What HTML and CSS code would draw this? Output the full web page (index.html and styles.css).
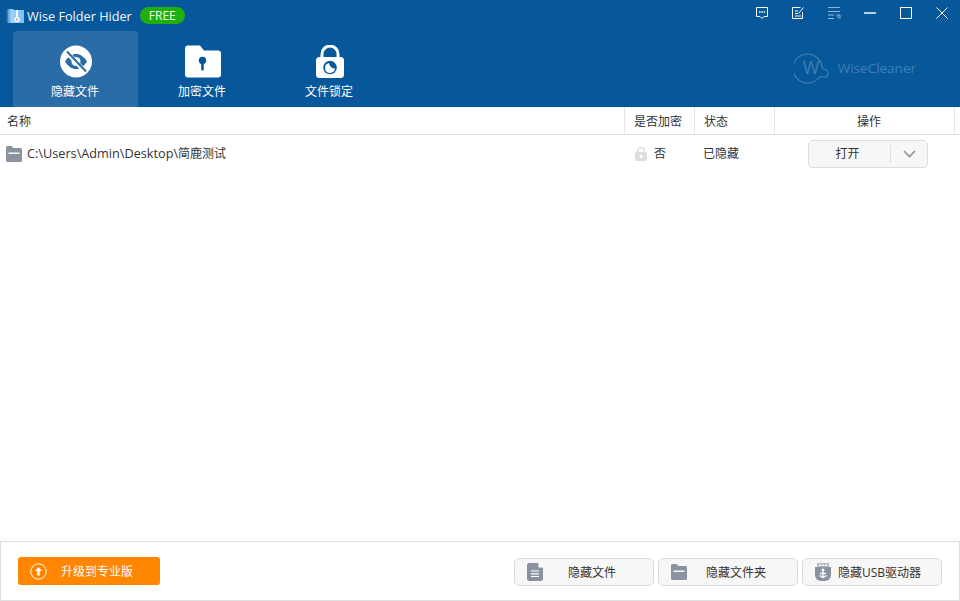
FILE: index.html
```html
<!DOCTYPE html>
<html lang="zh-CN">
<head>
<meta charset="utf-8">
<title>Wise Folder Hider</title>
<link rel="stylesheet" href="styles.css">
</head>
<body>
<div class="app">
  <header class="header">
    <div class="titlebar">
      <svg class="app-logo" width="18" height="15" viewBox="0 0 18 15"><defs><linearGradient id="lg" x1="0" y1="0" x2="1" y2="0"><stop offset="0" stop-color="#2f7fcb"/><stop offset=".3" stop-color="#9fd2f6"/><stop offset="1" stop-color="#7fbcec"/></linearGradient></defs><path d="M0 1h7l1 1h10v13H0z" fill="url(#lg)"/><rect x="0" y="1" width="1.500" height="14" fill="#1d5fa3"/><rect x="10" y="2" width="2" height="8" fill="#eef6fc"/><circle cx="11" cy="11.500" r="2.800" fill="#f4f8fb"/><circle cx="11" cy="11.500" r="0.900" fill="#6a9cc8"/></svg>
      <span class="app-name">Wise Folder Hider</span>
      <span class="free">FREE</span>
      <div class="winctl">
        <svg class="ctl" width="14" height="14" viewBox="0 0 14 14" fill="none" stroke="#fff"><path d="M1.500 1.500h11v9H9L7 12.500 5 10.500H1.500z"/><path d="M4 6h1.500M6.300 6h1.500M8.600 6h1.500" stroke-width="1.500"/></svg>
        <svg class="ctl" width="14" height="14" viewBox="0 0 14 14" fill="none" stroke="#fff"><path d="M11.500 6v6.500h-10v-11h8"/><path d="M4 5h3M4 7.500h3M4 10h6"/><path d="M7.500 7.500l5-6"/></svg>
        <svg class="ctl" width="14" height="14" viewBox="0 0 14 14" fill="none" stroke="#8fb3d3"><path d="M1 1.500h12M1 5.500h12M1 9h6M1 12.500h6"/><path d="M9.500 9h3.500v3.500M9.500 9.500l3 3"/></svg>
        <svg class="ctl" width="14" height="14" viewBox="0 0 14 14" fill="none" stroke="#b9d0e4" stroke-width="2"><path d="M1 7h12"/></svg>
        <svg class="ctl" width="14" height="14" viewBox="0 0 14 14" fill="none" stroke="#fff"><rect x="1.500" y="1.500" width="11" height="11"/></svg>
        <svg class="ctl" width="14" height="14" viewBox="0 0 14 14" fill="none" stroke="#fff"><path d="M1.500 1.500l11 11M12.500 1.500l-11 11"/></svg>
      </div>
    </div>
    <div class="toolbar">
      <nav class="tabs">
        <div class="tab active">
          <svg width="32" height="32" viewBox="0 0 32 32"><circle cx="16" cy="16" r="16" fill="#fff"/><path d="M5 16c3-5 7-7.500 11-7.500S24 11 27 16c-3 5-7 7.500-11 7.500S8 21 5 16z" fill="#2a6ca5"/><circle cx="16" cy="16" r="4.500" fill="#fff"/><path d="M13.500 13.500l5 5" stroke="#2a6ca5" stroke-width="1.300"/><path d="M6.500 6.500l19 20" stroke="#fff" stroke-width="4.500"/><path d="M7 6l19 20" stroke="#2a6ca5" stroke-width="2"/></svg>
          <span>隐藏文件</span>
        </div>
        <div class="tab">
          <svg width="36" height="32" viewBox="0 0 36 32"><path d="M3 0h12l4 5h14a3 3 0 0 1 3 3v21a3 3 0 0 1-3 3H3a3 3 0 0 1-3-3V3a3 3 0 0 1 3-3z" fill="#fff"/><circle cx="17.500" cy="15" r="3.700" fill="#07589a"/><rect x="16.200" y="15" width="2.600" height="10" rx="1" fill="#07589a"/></svg>
          <span>加密文件</span>
        </div>
        <div class="tab">
          <svg width="30" height="33" viewBox="0 0 30 33"><path d="M7 14V9a8 8 0 0 1 16 0v5" fill="none" stroke="#fff" stroke-width="3"/><rect x="1" y="12" width="28" height="21" rx="3.500" fill="#fff"/><circle cx="15" cy="22.500" r="6.800" fill="#07589a"/><path d="M14 18a5 5 0 1 0 6 5.500 6 6 0 0 1-6-5.500z" fill="#fff"/></svg>
          <span>文件锁定</span>
        </div>
      </nav>
      <div class="brand">
        <svg width="38" height="32" viewBox="0 0 38 32" fill="none" stroke="#3f7fb5" stroke-width="1.200"><path d="M25 25.500a14.500 14.500 0 1 1 3-10.500c.3 1.500 1 2 2.500 2.500a4 4 0 0 1 3.500 4 3.500 3.500 0 0 1-3.500 3.500c-2 0-3.500-1.500-5.500.500z"/></svg>
        <span class="brand-w">W</span>
        <span class="brand-name">WiseCleaner</span>
      </div>
    </div>
  </header>
  <main class="table">
    <div class="thead">
      <div class="th c-name">名称</div>
      <div class="th c-enc">是否加密</div>
      <div class="th c-state">状态</div>
      <div class="th c-act">操作</div>
      <div class="th c-rest"></div>
    </div>
    <div class="row">
      <div class="c-name cell-name">
        <svg width="16" height="16" viewBox="0 0 16 16"><path d="M1.500 0h4l2 2h7A1.500 1.500 0 0 1 16 3.500v11a1.500 1.500 0 0 1-1.500 1.500h-13A1.500 1.500 0 0 1 0 14.500v-13A1.500 1.500 0 0 1 1.500 0z" fill="#8c93a0"/><rect x="2.500" y="6.500" width="11" height="1.400" fill="#fff"/></svg>
        <span class="path">C:\Users\Admin\Desktop\<span class="path-cjk">简鹿测试</span></span>
      </div>
      <div class="c-enc cell-enc">
        <svg width="12" height="14" viewBox="0 0 12 14"><path d="M2.800 6V3.800a3.200 3.200 0 0 1 6.400 0V6" fill="none" stroke="#dedede" stroke-width="1.400"/><rect x="0" y="5" width="12" height="9" rx="1.500" fill="#dedede"/><circle cx="6" cy="9.500" r="1.500" fill="#fff"/></svg>
        <span class="lift">否</span>
      </div>
      <div class="c-state cell-state"><span class="lift">已隐藏</span></div>
      <div class="c-act cell-act">
        <div class="split">
          <span class="split-main"><span class="split-label">打开</span></span>
          <span class="split-arrow"><svg width="13" height="8" viewBox="0 0 13 8" fill="none" stroke="#8c93a0" stroke-width="1.600"><path d="M1 1l5.500 5.500L12 1"/></svg></span>
        </div>
      </div>
    </div>
  </main>
  <footer class="footer">
    <button class="upgrade">
      <svg width="17" height="17" viewBox="0 0 17 17"><circle cx="8.500" cy="8.500" r="7.700" fill="none" stroke="#fff"/><path d="M8.500 4l3.500 4H9.700v4.500H7.300V8H5z" fill="#fff"/></svg>
      <span>升级到专业版</span>
    </button>
    <div class="actions">
      <button class="btn b-file">
        <svg width="16" height="18" viewBox="0 0 16 18"><path d="M2 0h9l5 5v11a2 2 0 0 1-2 2H2a2 2 0 0 1-2-2V2a2 2 0 0 1 2-2z" fill="#8c93a0"/><path d="M4 8h8M4 10.800h8M4 13.500h8" stroke="#fff" stroke-width="1.200"/><path d="M11.500 0v4.500H16z" fill="#fff"/></svg>
        <span>隐藏文件</span>
      </button>
      <button class="btn b-folder">
        <svg width="16" height="16" viewBox="0 0 16 16"><path d="M1.500 0h4l2 2h7A1.500 1.500 0 0 1 16 3.500v11a1.500 1.500 0 0 1-1.500 1.500h-13A1.500 1.500 0 0 1 0 14.500v-13A1.500 1.500 0 0 1 1.500 0z" fill="#8c93a0"/><rect x="2.500" y="6.500" width="11" height="1.400" fill="#fff"/></svg>
        <span>隐藏文件夹</span>
      </button>
      <button class="btn b-usb">
        <svg width="16" height="18" viewBox="0 0 16 18"><path d="M2 0h12v4H2z" fill="#b4b9c2"/><path d="M4 1.500h2v1.500H4zM7 1.500h2v1.500H7zM10 1.500h2v1.500h-2z" fill="#fff"/><path d="M0 4h16v8a6 6 0 0 1-6 6H6a6 6 0 0 1-6-6z" fill="#8c93a0"/><path d="M8 6.500v8.500M5 10.500h6M4.500 12.500l3.500 2 3.500-2" fill="none" stroke="#fff" stroke-width="1.300"/><circle cx="8" cy="7" r="1.500" fill="#fff"/></svg>
        <span>隐藏USB驱动器</span>
      </button>
    </div>
  </footer>
</div>
</body>
</html>
```
FILE: styles.css
```css
* { box-sizing: border-box; }
html, body { margin: 0; padding: 0; height: 100%; background: #fff; }
body { font-family: "Open Sans", "Noto Sans CJK SC", sans-serif; font-size: 12px; color: #333; overflow: hidden; }
.app { display: flex; flex-direction: column; width: 960px; height: 601px; }

.header { flex: none; height: 107px; background: #07589a; color: #fff; }
.titlebar { display: flex; align-items: center; height: 31px; padding-left: 6px; }
.app-logo { margin-right: 3px; flex: none; }
.app-name { font-size: 12.700px; color: #f3f7fb; }
.free { margin-left: 8px; width: 45px; height: 17px; border-radius: 9px; background: #1eb00f; color: #f4fff0; font-size: 12px; line-height: 17px; text-align: center; }
.winctl { margin-left: auto; display: flex; gap: 22px; padding-right: 11px; margin-top: -6px; }
.ctl { display: block; }

.toolbar { display: flex; justify-content: space-between; height: 76px; padding-left: 13px; }
.tabs { display: flex; gap: 2px; }
.tab { width: 125px; height: 76px; display: flex; flex-direction: column; align-items: center; padding-top: 14px; border-radius: 4px 4px 0 0; }
.tab svg { height: 33px; flex: none; }
.tab span { margin: 5px 1px 0 0; font-size: 12px; line-height: 18px; color: #fff; }
.tab.active { background: #2a6ca5; }

.brand { position: relative; display: flex; align-items: center; gap: 6px; height: 32px; margin: 21px 44px 0 0; }
.brand-w { position: absolute; left: 9px; top: 4px; font-size: 18px; line-height: 22px; color: #3f7fb5; }
.brand-name { font-family: "Open Sans", sans-serif; font-size: 13.500px; color: #3f7fb5; }

.table { flex: 1; display: flex; flex-direction: column; }
.thead { display: flex; height: 28px; border-bottom: 1px solid #e0e0e0; color: #333; }
.th { display: flex; align-items: center; border-right: 1px solid #e6e6e6; }
.c-name { width: 625px; padding-left: 7px; }
.c-enc { width: 70px; padding-left: 9px; }
.c-state { width: 80px; padding-left: 9px; }
.c-act { width: 180px; }
.th.c-act { justify-content: center; padding-left: 9px; }
.c-rest { flex: 1; border-right: 0; }

.row { display: flex; align-items: center; height: 38px; }
.cell-name { display: flex; align-items: center; gap: 5px; padding-left: 6px; }
.path { font-size: 12.700px; margin-bottom: 2px; }
.path-cjk { font-size: 12px; }
.lift { display: block; margin-bottom: 2px; }
.cell-enc { display: flex; align-items: center; gap: 7px; padding-left: 10px; }
.cell-state { padding-left: 8px; }
.cell-act { padding-left: 33px; }

.split { display: flex; align-items: center; width: 120px; height: 28px; border: 1px solid #dcdcdc; border-radius: 5px; background: #f7f7f7; }
.split-main { width: 82px; height: 18px; padding-right: 4px; border-right: 1px solid #dcdfe3; line-height: 18px; text-align: center; }
.split-label { display: block; }
.split-arrow { flex: 1; display: flex; justify-content: center; }

.footer { flex: none; display: flex; justify-content: space-between; align-items: center; height: 60px; padding: 0 17px; border: 1px solid #e0e0e0; }
button { font: inherit; color: inherit; cursor: default; }
.upgrade { display: flex; align-items: center; width: 142px; height: 28px; padding: 0 0 0 12px; border: 0; border-radius: 3px; background: #ff8600; color: #fff; }
.upgrade span { margin-left: 14px; }
.actions { display: flex; gap: 4px; margin-top: 2px; }
.btn { display: flex; align-items: center; height: 28px; padding: 0 0 0 12px; border: 1px solid #dcdcdc; border-radius: 5px; background: #f7f7f7; }
.b-file, .b-folder, .b-usb { width: 140px; }
.b-file span { margin-left: 25px; }
.b-folder span { margin-left: 19px; }
.b-usb span { margin-left: 7px; }
```
